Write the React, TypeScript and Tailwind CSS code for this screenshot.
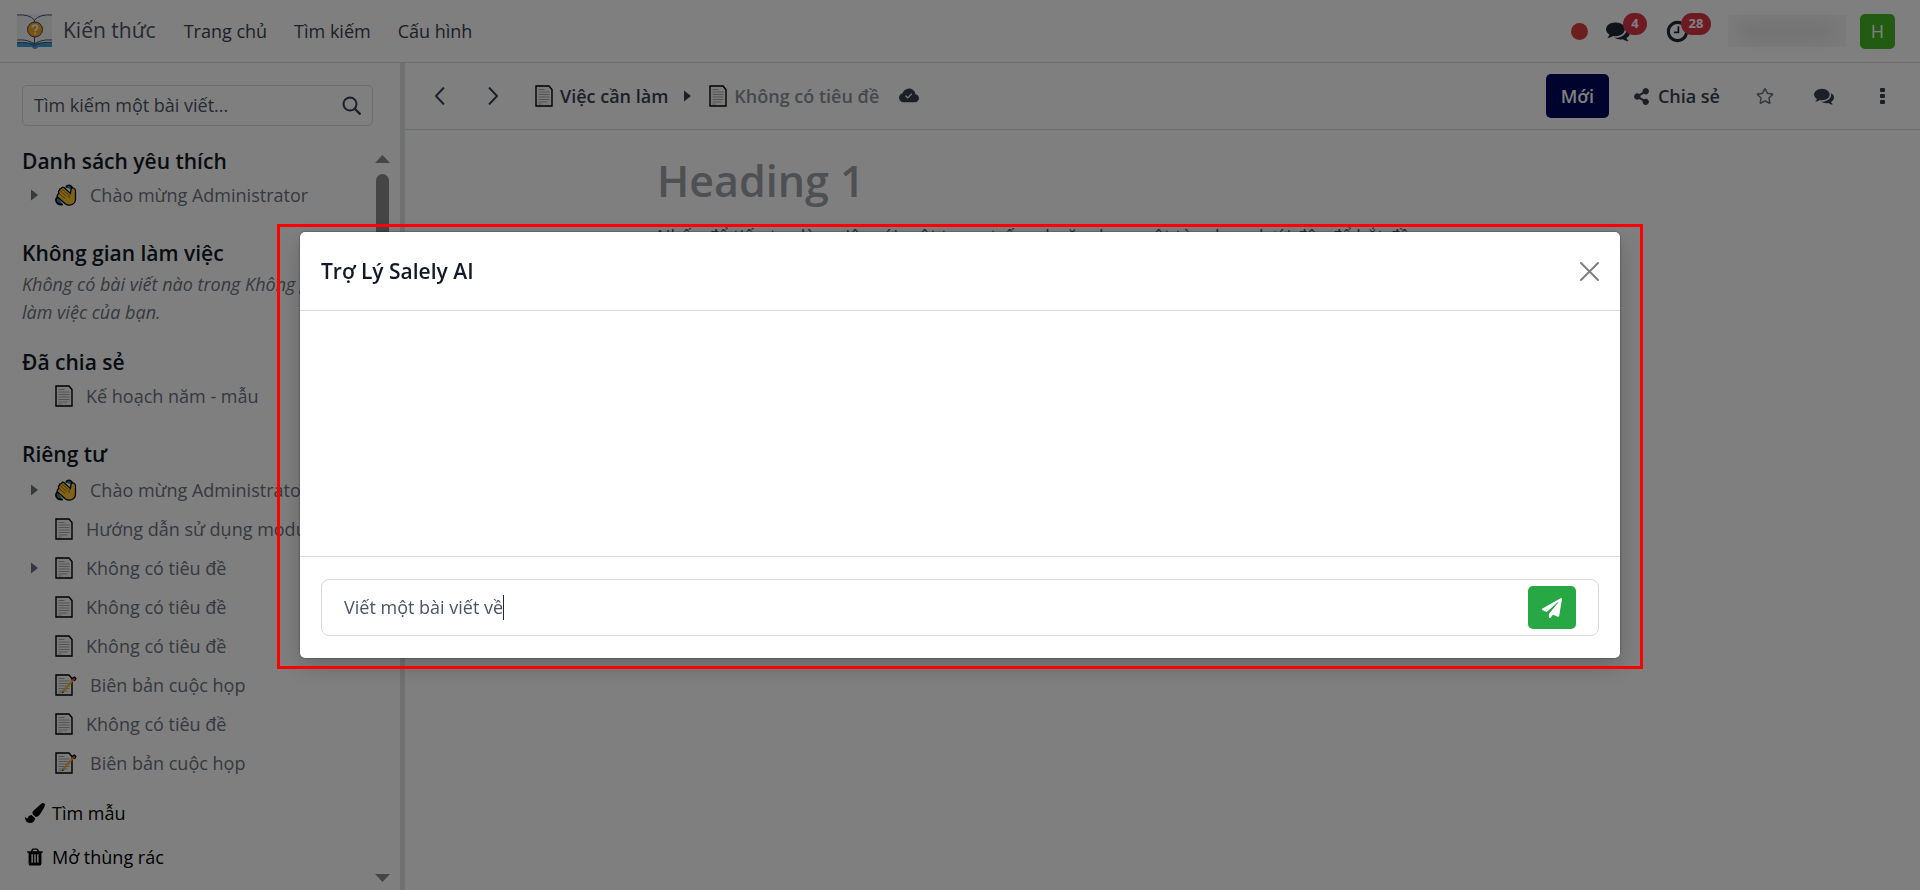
import type { ReactNode } from "react";
import { BsCloudCheckFill } from "react-icons/bs";
import { FaPaintBrush, FaPaperPlane, FaRegStar, FaShareAlt } from "react-icons/fa";

const COMMENTS =
  "M1408 768q0 139-94 257t-256.5 186.5-353.5 68.5q-86 0-176-16-124 88-278 128-36 9-86 16h-3q-11 0-20.5-8t-11.5-21q-1-3-1-6.5t.5-6.5 2-6l2.5-5 3.5-5.5 4-5 4.5-5 4-4.5q5-6 23-25t26-29.5 22.5-29 25-38.5 20.5-44q-124-72-195-177t-71-224q0-139 94-257t256.5-186.5 353.5-68.5 353.5 68.5 256.5 186.5 94 257zm384 256q0 120-71 224.5t-195 176.5q10 24 20.5 44t25 38.5 22.5 29 26 29.5 23 25q1 1 4 4.5t4.5 5 4 5 3.5 5.5l2.5 5 2 6 .5 6.5-1 6.5q-3 14-13 22t-22 7q-50-7-86-16-154-40-278-128-90 16-176 16-271 0-472-132 58 4 88 4 161 0 309-45t264-129q125-92 192-212t67-254q0-77-23-152 129 71 204 178t75 230z";
const CLOCK =
  "M1024 544v448q0 14-9 23t-23 9h-320q-14 0-23-9t-9-23v-64q0-14 9-23t23-9h224v-352q0-14 9-23t23-9h64q14 0 23 9t9 23zm416 352q0-148-73-273t-198-198-273-73-273 73-198 198-73 273 73 273 198 198 273 73 273-73 198-198 73-273zm224 0q0 209-103 385.5t-279.5 279.5-385.5 103-385.5-103-279.5-279.5-103-385.5 103-385.5 279.5-279.5 385.5-103 385.5 103 279.5 279.5 103 385.5z";
const TRASH =
  "M704 1376v-704q0-14-9-23t-23-9h-64q-14 0-23 9t-9 23v704q0 14 9 23t23 9h64q14 0 23-9t9-23zm256 0v-704q0-14-9-23t-23-9h-64q-14 0-23 9t-9 23v704q0 14 9 23t23 9h64q14 0 23-9t9-23zm256 0v-704q0-14-9-23t-23-9h-64q-14 0-23 9t-9 23v704q0 14 9 23t23 9h64q14 0 23-9t9-23zm-544-992h448l-48-117q-7-9-17-11h-317q-10 2-17 11zm928 32v64q0 14-9 23t-23 9h-96v948q0 83-47 143.5t-113 60.5h-832q-66 0-113-58.5t-47-141.5v-952h-96q-14 0-23-9t-9-23v-64q0-14 9-23t23-9h309l70-167q15-37 54-63t79-26h320q40 0 79 26t54 63l70 167h309q14 0 23 9t9 23z";

const Glyph = ({ d, className }: { d: string; className: string }) => (
  <svg viewBox="0 0 1792 1792" fill="currentColor" className={className} aria-hidden="true">
    <path d={d} />
  </svg>
);

const Logo = () => (
  <svg viewBox="0 0 35 35" className="size-[35px]" fill="none" aria-hidden="true">
    <rect width="35" height="33" fill="#eef0f5" />
    <path d="M0 28.500h35v4.500H21.500q-3.500 4-7 0H0z" fill="#3aa0d8" />
    <path d="M0 1q12-1 17.500 5Q23 0 35 1M17.500 6v3M17.500 22v8M0 26q12-1 17.500 4.500Q23 25 35 26M0 28.500q12-1 17.500 3.500Q23 27.500 35 28.500" stroke="#4b5568" strokeWidth="1" />
    <circle cx="18" cy="15.500" r="7.500" fill="#f5a623" stroke="#3b4252" />
    <path d="M15.500 13.500q0-2.500 2.500-2.500t2.500 2.300q0 1.400-1.400 2.200-1.100.6-1.100 1.700" stroke="#fff" strokeWidth="1.700" />
    <circle cx="18" cy="19.500" r="1.100" fill="#fff" />
  </svg>
);

const PageIcon = () => (
  <svg viewBox="0 0 18 22" className="h-[22px] w-[18px] shrink-0" aria-hidden="true">
    <path d="M1 1h13l3 3.500V21H1z" fill="#f5f5f5" stroke="#000" strokeWidth="1.400" />
    <path d="M3.500 4.500h6M3.500 7h11M3.500 9.500h11M3.500 12h11M3.500 14.500h11M3.500 17h9M3.500 19h3" stroke="#a8a8a8" strokeWidth="1" />
  </svg>
);

const MemoIcon = () => (
  <svg viewBox="0 0 22 22" className="h-[22px] w-[22px] shrink-0" aria-hidden="true">
    <path d="M1 1h13l3 3.500V21H1z" fill="#f5f5f5" stroke="#000" strokeWidth="1.400" />
    <path d="M3.500 4.500h6M3.500 7h11M3.500 9.500h11M3.500 12h11M3.500 14.500h11M3.500 17h9M3.500 19h3" stroke="#a8a8a8" strokeWidth="1" />
    <path d="M8 17.500 18 6" stroke="#f0b429" strokeWidth="2" />
    <path d="m17.500 6.500 2-2.500" stroke="#e0485a" strokeWidth="2.500" />
    <path d="m17 4.500 2.500-1.500 1.500 1.500-1.500 2.500M7 18.500l1.500-.5" stroke="#000" strokeWidth="1.200" fill="none" />
  </svg>
);

const WaveIcon = () => (
  <svg viewBox="0 0 22 22" className="size-[22px] shrink-0" aria-hidden="true">
    <path d="M11 3.500Q12 .5 15 1.500t2 4.500M2.500 13Q0 15 1.500 18T8 20.500" fill="#1c8ba0" stroke="#000" strokeWidth="1.700" />
    <path d="M4 9q-1.500-2 .5-2.500Q4 4.500 6.500 4.500 7 2.500 9 3.500l6.500 6 .5-4q.5-2 2.500-1.500T20.500 7v8q0 4-3.500 5.500T10.500 20L2.500 13q-1-1.500.5-2.500Q3 9.500 4 9z" fill="#ffc22e" stroke="#000" strokeWidth="1.200" />
    <path d="m4 9.500 6 5M5 6.500l6.500 6M7 5l6 5.500M15.500 9.500q-3 2-1 4.500" fill="none" stroke="#8a5a00" strokeWidth=".9" />
  </svg>
);

const Caret = ({ className = "" }: { className?: string }) => (
  <svg viewBox="0 0 7 12" fill="currentColor" className={`h-3 w-[7px] shrink-0 ${className}`} aria-hidden="true">
    <path d="M0 0.500 7 6 0 11.500z" />
  </svg>
);

type Kind = "page" | "memo" | "wave";

const icons: Record<Kind, ReactNode> = {
  page: <PageIcon />,
  memo: <MemoIcon />,
  wave: <WaveIcon />,
};

const privateArticles: { title: string; kind: Kind; open?: boolean }[] = [
  { title: "Chào mừng Administrator", kind: "wave", open: true },
  { title: "Hướng dẫn sử dụng module", kind: "page" },
  { title: "Không có tiêu đề", kind: "page", open: true },
  { title: "Không có tiêu đề", kind: "page" },
  { title: "Không có tiêu đề", kind: "page" },
  { title: "Biên bản cuộc họp", kind: "memo" },
  { title: "Không có tiêu đề", kind: "page" },
  { title: "Biên bản cuộc họp", kind: "memo" },
];

const Article = ({ title, kind, open }: { title: string; kind: Kind; open?: boolean }) => (
  <li className="flex h-9 items-center pl-[9px] text-[#6b7280]">
    <span className="flex w-6 shrink-0">{open && <Caret />}</span>
    <a href="#" className="flex items-center gap-[13px] whitespace-nowrap">
      {icons[kind]}
      {title}
    </a>
  </li>
);

const SectionTitle = ({ children }: { children: ReactNode }) => (
  <h2 className="text-[21px] leading-8 font-semibold text-[#111827]">{children}</h2>
);

const Navbar = () => (
  <header className="flex h-[63px] shrink-0 items-center border-b border-[#d8dadd] pr-[25px] pl-[17px]">
    <a href="#" className="flex items-center gap-[11px] text-[21px] text-[#4b5563]">
      <Logo />
      Kiến thức
    </a>
    <nav className="ml-7 flex gap-[27px] text-[#374151]">
      <a href="#">Trang chủ</a>
      <a href="#">Tìm kiếm</a>
      <a href="#">Cấu hình</a>
    </nav>
    <div className="ml-auto flex items-center">
      <span className="size-[17px] rounded-full bg-[#d9403a]" />
      <button aria-label="Tin nhắn" className="relative ml-[18px] flex w-[41px] text-[#1f2937]">
        <Glyph d={COMMENTS} className="size-6" />
        <span className="absolute -top-[6px] right-0 flex h-[22px] w-6 items-center justify-center rounded-full bg-[#dc3545] text-[13px] font-bold text-white">
          4
        </span>
      </button>
      <button aria-label="Hoạt động" className="relative ml-[18px] flex w-[46px] text-[#1f2937]">
        <Glyph d={CLOCK} className="size-[25px]" />
        <span className="absolute -top-[6px] right-0 flex h-[22px] w-[30px] items-center justify-center rounded-full bg-[#dc3545] text-[13px] font-bold text-white">
          28
        </span>
      </button>
      <span className="ml-[17px] flex h-8 w-[118px] items-center justify-center bg-[#f6f6f6]">
        <span className="h-4 w-[92px] bg-[#e4e4e4] blur-[8px]" />
      </span>
      <button className="ml-[14px] flex size-[35px] items-center justify-center rounded-[5px] bg-[#45b824] text-[18px] text-white">
        H
      </button>
    </div>
  </header>
);

const Sidebar = () => (
  <aside className="flex w-[405px] shrink-0 flex-col border-r-[5px] border-[#dee2e6]">
    <div className="mt-[22px] mr-[27px] ml-[22px] flex h-[41px] items-center rounded-[5px] border border-[#d8dadd] px-[11px]">
      <input
        type="search"
        aria-label="Tìm kiếm một bài viết"
        placeholder="Tìm kiếm một bài viết..."
        className="min-w-0 flex-1 bg-transparent outline-none placeholder:text-[#4b5563]"
      />
      <svg viewBox="0 0 19 19" className="size-[19px] text-[#374151]" fill="none" stroke="currentColor" strokeWidth="2" aria-hidden="true">
        <circle cx="8" cy="8" r="6.500" />
        <path d="m12.500 12.500 6 6" strokeWidth="2.400" />
      </svg>
    </div>
    <div className="mt-[19px] flex min-h-0 flex-1">
      <div className="min-w-0 flex-1 overflow-hidden pl-[22px]">
        <SectionTitle>Danh sách yêu thích</SectionTitle>
        <ul className="mb-6">
          <Article title="Chào mừng Administrator" kind="wave" open />
        </ul>
        <SectionTitle>Không gian làm việc</SectionTitle>
        <p className="mb-5 pt-px pr-6 leading-7 text-[#6b7280] italic">
          Không có bài viết nào trong Không gian làm việc của bạn.
        </p>
        <SectionTitle>Đã chia sẻ</SectionTitle>
        <ul className="mb-6">
          <Article title="Kế hoạch năm - mẫu" kind="page" />
        </ul>
        <SectionTitle>Riêng tư</SectionTitle>
        <ul className="my-[2px] flex flex-col gap-[3px]">
          {privateArticles.map((article, i) => (
            <Article key={i} {...article} />
          ))}
        </ul>
        <div className="pt-2 pl-[3px] text-black">
          <button className="flex h-11 items-center gap-[7px]">
            <FaPaintBrush className="size-5" />
            Tìm mẫu
          </button>
          <button className="flex h-11 items-center gap-[7px]">
            <Glyph d={TRASH} className="size-5" />
            Mở thùng rác
          </button>
        </div>
      </div>
      <div className="mr-[10px] flex w-[15px] shrink-0 flex-col items-center pt-[10px] pb-2 text-[#8a8a8a]">
        <svg viewBox="0 0 15 8" fill="currentColor" className="h-2 w-[15px]" aria-hidden="true">
          <path d="M0 8 7.500 0 15 8z" />
        </svg>
        <span className="mt-[11px] h-80 w-[13px] rounded-full bg-[#8a8a8a]" />
        <svg viewBox="0 0 15 8" fill="currentColor" className="mt-auto h-2 w-[15px]" aria-hidden="true">
          <path d="M0 0 7.500 8 15 0z" />
        </svg>
      </div>
    </div>
  </aside>
);

const ArticleBar = () => (
  <div className="flex h-[67px] items-center border-b border-[#d8dadd] pr-[35px] pl-[30px] font-semibold text-[#374151]">
    <button aria-label="Trước">
      <svg viewBox="0 0 10 18" className="h-[18px] w-[10px]" fill="none" stroke="currentColor" strokeWidth="2" aria-hidden="true">
        <path d="M9 .5.900 9 9 17.500" />
      </svg>
    </button>
    <button aria-label="Sau" className="ml-[43px]">
      <svg viewBox="0 0 10 18" className="h-[18px] w-[10px]" fill="none" stroke="currentColor" strokeWidth="2" aria-hidden="true">
        <path d="M1 .5 9.100 9 1 17.500" />
      </svg>
    </button>
    <a href="#" className="ml-[37px] flex items-center gap-[7px]">
      <PageIcon />
      Việc cần làm
    </a>
    <Caret className="mr-[18px] ml-4" />
    <a href="#" className="flex items-center gap-[7px] text-[#8b9099]">
      <PageIcon />
      Không có tiêu đề
    </a>
    <BsCloudCheckFill className="ml-5 size-5" />
    <button className="ml-auto h-11 w-[63px] rounded-[5px] bg-[#00065c] text-white">Mới</button>
    <button className="ml-6 flex items-center gap-2">
      <FaShareAlt className="size-[17px]" />
      Chia sẻ
    </button>
    <button aria-label="Yêu thích" className="ml-9 text-[#6b7280]">
      <FaRegStar className="size-[18px]" />
    </button>
    <button aria-label="Bình luận" className="ml-10">
      <Glyph d={COMMENTS} className="size-5" />
    </button>
    <button aria-label="Thêm" className="ml-[46px]">
      <svg viewBox="0 0 5 16" fill="currentColor" className="h-4 w-[5px]" aria-hidden="true">
        <rect width="5" height="4" rx="1" />
        <rect y="6" width="5" height="4" rx="1" />
        <rect y="12" width="5" height="4" rx="1" />
      </svg>
    </button>
  </div>
);

const AssistantDialog = () => (
  <div className="fixed inset-0 flex items-center justify-center bg-black/50">
    <div
      role="dialog"
      aria-labelledby="assistant-title"
      className="relative w-11/12 max-w-[1320px] rounded-[5px] bg-white shadow-[0_8px_24px_rgba(0,0,0,0.2),0_0_2px_rgba(0,0,0,0.6)]"
    >
      <div className="flex h-[79px] items-center justify-between border-b border-[#d8dadd] px-[21px]">
        <h1 id="assistant-title" className="pt-[2px] text-[21px] font-semibold text-[#111827]">
          Trợ Lý Salely AI
        </h1>
        <button aria-label="Đóng">
          <svg viewBox="0 0 19 19" className="size-[19px]" fill="none" stroke="#7f7f7f" strokeWidth="2" strokeLinecap="round" aria-hidden="true">
            <path d="m1 1 17 17M18 1 1 18" />
          </svg>
        </button>
      </div>
      <div className="h-[245px]" />
      <div className="border-t border-[#d8dadd] px-[21px] py-[22px]">
        <form className="flex h-[57px] items-center rounded-lg border border-[#d8dadd] px-[22px]">
          <input
            aria-label="Câu lệnh"
            defaultValue="Viết một bài viết về"
            className="field-sizing-content bg-transparent text-[#4b5563] caret-transparent outline-none"
          />
          <span className="h-[25px] w-px bg-[#1f2937]" />
          <button
            type="button"
            aria-label="Gửi"
            className="ml-auto flex h-[43px] w-12 items-center justify-center rounded-[5px] bg-[#28a745] text-white"
          >
            <FaPaperPlane className="size-5" />
          </button>
        </form>
      </div>
      {/* highlight frame */}
      <div className="pointer-events-none absolute -inset-x-[23px] -top-[8px] -bottom-[11px] border-[3px] border-[#ff0000]" />
    </div>
  </div>
);

export default function App() {
  return (
    <div className="flex h-screen flex-col overflow-hidden bg-white font-['Open_Sans','Noto_Sans',sans-serif] text-[18px]">
      <Navbar />
      <div className="flex min-h-0 flex-1">
        <Sidebar />
        <main className="min-w-0 flex-1">
          <ArticleBar />
          <div className="pt-6 pl-[252px]">
            <h1 className="text-[43px] leading-[54px] font-semibold text-[#9ca0a8]">Heading 1</h1>
            <p className="pt-[14px] leading-7 text-[#4b5563]">
              Nhấn để tiếp tục làm việc với một trang trống, hoặc chọn một tùy chọn dưới đây để bắt đầu
            </p>
          </div>
        </main>
      </div>
      <AssistantDialog />
    </div>
  );
}
